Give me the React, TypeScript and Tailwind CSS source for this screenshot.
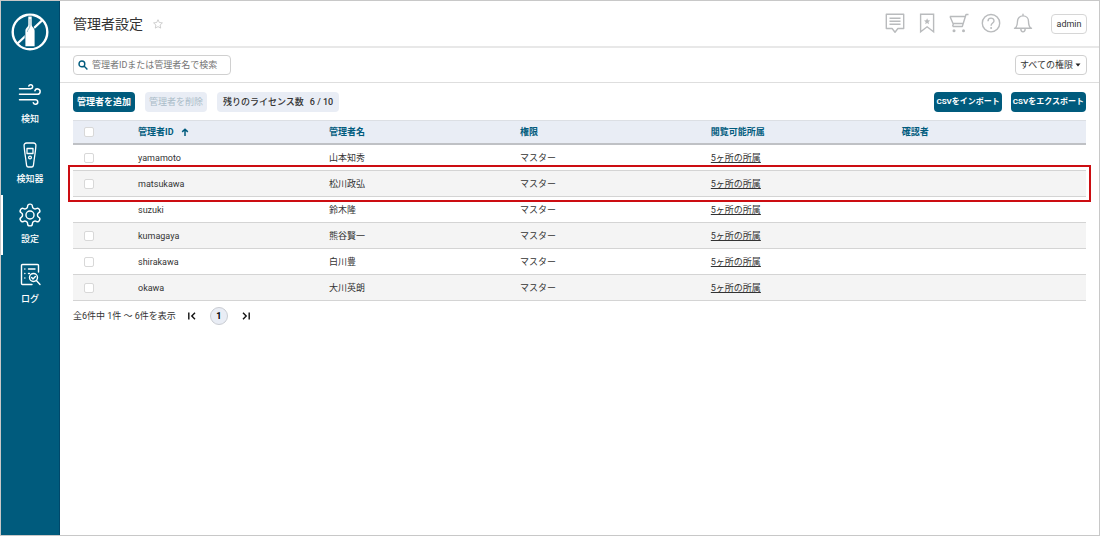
import type { ReactNode } from "react";

function LogoIcon() {
  return (
    <svg viewBox="0 0 40 40" className="h-10 w-10" aria-hidden="true">
      <circle cx="20" cy="20" r="17.3" fill="none" stroke="#fff" strokeWidth="2.4" />
      <path d="M7.500 31.500 32.500 8" stroke="#fff" strokeWidth="2.400" />
      <path
        d="M18.300 4.500h3.400v8.300c0 2.400 2.900 3.200 2.900 6v15.400h-9.200V18.800c0-2.800 2.900-3.600 2.900-6z"
        fill="#fff"
        stroke="#005b7d"
        strokeWidth="1.4"
        paintOrder="stroke"
      />
      <path d="M17.300 20c0-2.600 2.700-3.400 2.700-6.500V7" fill="none" stroke="#7fadbe" strokeWidth=".8" />
    </svg>
  );
}

function WindIcon() {
  return (
    <svg viewBox="0 0 24 24" className="size-6" fill="none" stroke="#fff" strokeWidth="1.5" strokeLinecap="round" aria-hidden="true">
      <path d="M1.500 5.700h11.200a2 2 0 1 0-1.900-2.600" />
      <path d="M1.500 11.300h18a2.700 2.700 0 1 0-2.600-3.600" />
      <path d="M1.500 16.700h16a2.300 2.300 0 1 1-2.200 3.100" />
    </svg>
  );
}

function DeviceIcon() {
  return (
    <svg viewBox="0 0 24 26" className="h-[26px] w-6" fill="none" stroke="#fff" strokeWidth="1.3" strokeLinejoin="round" aria-hidden="true">
      <path d="M8.600 1h6.800c1.600 0 2.600 1 2.500 2.500-.2 3.500-.8 8-1.500 12.500l-1 7.500c-.2 1-.7 1.500-1.600 1.500h-3.600c-.9 0-1.400-.5-1.600-1.500l-1-7.500C6.900 11.500 6.300 7 6.100 3.500 6 2 7 1 8.600 1z" />
      <path d="M9 6.500h6v5H9z" />
      <circle cx="12" cy="15.500" r="1.400" />
    </svg>
  );
}

function GearIcon() {
  return (
    <svg viewBox="1 1 22 22" className="size-6" fill="none" stroke="#fff" strokeWidth="1.3" strokeLinejoin="round" aria-hidden="true">
      <path d="M12.220 2h-.44a2 2 0 0 0-2 2v.18a2 2 0 0 1-1 1.730l-.43.25a2 2 0 0 1-2 0l-.15-.08a2 2 0 0 0-2.730.73l-.22.38a2 2 0 0 0 .73 2.730l.15.1a2 2 0 0 1 1 1.720v.51a2 2 0 0 1-1 1.740l-.15.09a2 2 0 0 0-.73 2.730l.22.38a2 2 0 0 0 2.730.73l.15-.08a2 2 0 0 1 2 0l.43.25a2 2 0 0 1 1 1.730V20a2 2 0 0 0 2 2h.44a2 2 0 0 0 2-2v-.18a2 2 0 0 1 1-1.730l.43-.25a2 2 0 0 1 2 0l.15.08a2 2 0 0 0 2.730-.73l.22-.39a2 2 0 0 0-.73-2.730l-.15-.08a2 2 0 0 1-1-1.740v-.5a2 2 0 0 1 1-1.740l.15-.09a2 2 0 0 0 .73-2.730l-.22-.38a2 2 0 0 0-2.730-.73l-.15.08a2 2 0 0 1-2 0l-.43-.25a2 2 0 0 1-1-1.730V4a2 2 0 0 0-2-2z" />
      <circle cx="12" cy="12" r="3.700" />
    </svg>
  );
}

function LogIcon() {
  return (
    <svg viewBox="0 0 24 24" className="size-6" fill="none" stroke="#fff" strokeWidth="1.4" strokeLinecap="round" strokeLinejoin="round" aria-hidden="true">
      <path d="M20.500 9V2.500a1 1 0 0 0-1-1h-15a1 1 0 0 0-1 1v18a1 1 0 0 0 1 1H14" />
      <path d="M10.500 6H17M10.500 10.500h1M6.800 6h.1M6.800 10.500h.1M6.800 15h.1" />
      <circle cx="15.500" cy="14.500" r="4" />
      <path d="m18.400 17.500 3.600 4M13.700 14.500l1.300 1.400 2.400-2.500" />
    </svg>
  );
}

function HeaderIcon({ label, children }: { label: string; children: ReactNode }) {
  return (
    <button type="button" aria-label={label} className="text-[#b9bbbd]">
      <svg viewBox="0 0 20 20" className="size-5 overflow-visible" fill="none" stroke="currentColor" strokeWidth="1.4" aria-hidden="true">
        {children}
      </svg>
    </button>
  );
}

function CheckBox({ label }: { label: string }) {
  return (
    <input
      type="checkbox"
      aria-label={label}
      className="block size-[10px] appearance-none rounded-xs border border-[#d8d8d8] bg-white checked:bg-[#005b7d]"
    />
  );
}

const navItems = [
  { label: "検知", icon: <WindIcon /> },
  { label: "検知器", icon: <DeviceIcon /> },
  { label: "設定", icon: <GearIcon />, active: true },
  { label: "ログ", icon: <LogIcon /> },
];

const admins = [
  { id: "yamamoto", name: "山本知秀", selectable: true },
  { id: "matsukawa", name: "松川政弘", selectable: true, highlighted: true },
  { id: "suzuki", name: "鈴木隆", selectable: false },
  { id: "kumagaya", name: "熊谷賢一", selectable: true },
  { id: "shirakawa", name: "白川豊", selectable: true },
  { id: "okawa", name: "大川英朗", selectable: true },
];

export default function App() {
  return (
    <div className="flex min-h-screen border border-[#c8c8c8] bg-white font-['Roboto','Noto_Sans_CJK_JP',sans-serif] text-[9px] leading-3 text-[#333]">
      <nav className="w-[59px] shrink-0 border-r border-[#00486a] bg-[#005b7d] text-white">
        <a href="#home" aria-label="ホーム" className="flex justify-center pt-[11px] pb-[23px]">
          <LogoIcon />
        </a>
        <ul>
          {navItems.map((item) => (
            <li key={item.label}>
              <a
                href={`#${item.label}`}
                className={`flex h-[60px] flex-col items-center border-l-2 pr-0.5 leading-[8px] font-medium ${item.active ? "border-white" : "border-transparent"}`}
              >
                <span className="flex h-10 items-center">{item.icon}</span>
                <span>{item.label}</span>
              </a>
            </li>
          ))}
        </ul>
      </nav>

      <div className="min-w-0 flex-1">
        <header className="flex h-[47px] items-center justify-between border-b-2 border-[#e8e8e8] pr-3 pl-[13px]">
          <div className="flex items-center gap-[10px]">
            <h1 className="text-sm leading-5">管理者設定</h1>
            <button type="button" aria-label="お気に入り">
              <svg viewBox="0 0 10 10" className="size-[10px]" fill="none" stroke="#c4c4c4" strokeWidth=".8" strokeLinejoin="round" aria-hidden="true">
                <path d="m5 .7 1.300 2.800 3.100.4-2.300 2.100.6 3.100L5 7.600 2.300 9.100l.6-3.100L.6 3.900l3.100-.4z" />
              </svg>
            </button>
          </div>
          <div className="flex items-center gap-3">
            <HeaderIcon label="メッセージ">
              <path d="M1.300.3h17.400v14.200h-5.800L10 18.200l-2.900-3.700H1.300zM4.500 4.300h11M4.500 7.300h11M4.500 10.300h11" strokeLinejoin="round" />
            </HeaderIcon>
            <HeaderIcon label="ブックマーク">
              <path d="M3.600.3h13v17.500l-6.500-5-6.500 5z" />
              <path d="m10.100 4.300.9 2 2.200.2-1.700 1.500.5 2.200-1.900-1.200-1.900 1.200.5-2.200L7 6.500l2.200-.2z" fill="currentColor" stroke="none" />
            </HeaderIcon>
            <HeaderIcon label="カート">
              <path d="M19.500.5H17l-3.700 12H3.800M.8 2.500h15M1 2.500l3 7h10M4.500 9.500l-1 3" strokeLinejoin="round" />
              <circle cx="5" cy="16.800" r="1.500" fill="currentColor" stroke="none" />
              <circle cx="14.500" cy="16.800" r="1.500" fill="currentColor" stroke="none" />
            </HeaderIcon>
            <HeaderIcon label="ヘルプ">
              <circle cx="10" cy="9.200" r="8.700" />
              <path d="M7 7.200c0-4 6-4 6-.3 0 2.100-2.900 2.200-2.900 4.800" />
              <circle cx="10.100" cy="14" r="1" fill="currentColor" stroke="none" />
            </HeaderIcon>
            <HeaderIcon label="通知">
              <path d="M1.500 14.200h17M2 14.200c2.500-2 2.500-4.500 2.500-7 0-3 2.200-5.300 5.500-5.300s5.500 2.300 5.500 5.300c0 2.500 0 5 2.500 7M7.800 14.700c.2 4.200 4.200 4.200 4.400 0M10 .2v1.500" strokeLinecap="round" strokeLinejoin="round" />
            </HeaderIcon>
            <button type="button" className="ml-1.5 h-5 w-9 rounded border border-[#d6d6d6]">
              admin
            </button>
          </div>
        </header>

        <section className="flex h-[35px] items-center justify-between border-b border-[#dedede] pr-3 pl-[13px]">
          <label className="flex h-5 w-[158px] items-center gap-1 rounded border border-[#d0d0d0] px-1">
            <svg viewBox="0 0 10 10" className="size-[10px] shrink-0" fill="none" stroke="#005b7d" strokeWidth="1.4" aria-hidden="true">
              <circle cx="3.900" cy="3.900" r="2.900" />
              <path d="m6 6 3.400 3.400" />
            </svg>
            <input
              type="text"
              aria-label="管理者を検索"
              placeholder="管理者IDまたは管理者名で検索"
              className="min-w-0 flex-1 bg-transparent outline-none placeholder:text-[#757575]"
            />
          </label>
          <div className="relative">
            <select aria-label="権限" className="h-5 w-[72px] appearance-none rounded border border-[#d0d0d0] pl-1">
              <option>すべての権限</option>
              <option>マスター</option>
            </select>
            <svg viewBox="0 0 6 4" className="pointer-events-none absolute top-2 right-1.5 h-1 w-1.5" aria-hidden="true">
              <path d="M.5.5h5L3 3.500z" fill="#222" />
            </svg>
          </div>
        </section>

        <main className="px-[13px]">
          <div className="flex items-center justify-between pt-[9px] pb-2">
            <div className="flex gap-[10px]">
              <button type="button" className="h-5 rounded bg-[#005b7d] px-1 font-bold text-white">
                管理者を追加
              </button>
              <button type="button" disabled className="h-5 rounded bg-[#e9edf5] px-1 text-[#a9bcc8]">
                管理者を削除
              </button>
              <p className="flex h-5 items-center gap-1.5 rounded bg-[#e9edf5] px-1.5 font-medium">
                <span>残りのライセンス数</span>
                <span>6 / 10</span>
              </p>
            </div>
            <div className="flex gap-[9px]">
              <button type="button" className="h-5 rounded bg-[#005b7d] px-0.5 text-[8px] font-bold text-white">
                CSVをインポート
              </button>
              <button type="button" className="h-5 rounded bg-[#005b7d] px-0.5 text-[8px] font-bold text-white">
                CSVをエクスポート
              </button>
            </div>
          </div>

          <table className="w-full table-fixed border-separate border-spacing-0 text-left">
            <colgroup>
              <col className="w-[65px]" />
              <col className="w-[18.85%]" />
              <col className="w-[18.85%]" />
              <col className="w-[18.85%]" />
              <col className="w-[18.85%]" />
              <col />
            </colgroup>
            <thead>
              <tr className="h-[25px] bg-[#e9edf5] text-[#005b7d] *:border-t *:border-b-2 *:border-t-[#dcdfe4] *:border-b-[#bfc1c5]">
                <th className="pl-[11px]">
                  <CheckBox label="すべて選択" />
                </th>
                <th>
                  <span className="flex items-center gap-2">
                    管理者ID
                    <svg viewBox="0 0 8 8" className="size-2" fill="none" stroke="currentColor" strokeWidth="1.5" aria-hidden="true">
                      <path d="M4 8V1.300M1.200 3.900 4 1.200l2.800 2.700" />
                    </svg>
                  </span>
                </th>
                <th>管理者名</th>
                <th>権限</th>
                <th>閲覧可能所属</th>
                <th>確認者</th>
              </tr>
            </thead>
            <tbody>
              {admins.map((admin) => (
                <tr key={admin.id} className="relative h-[26px] *:border-b *:border-[#d4d4d4] even:bg-[#f4f4f4]">
                  <td className="pl-[11px]">
                    {admin.selectable && <CheckBox label={`${admin.id}を選択`} />}
                    {admin.highlighted && (
                      <span className="pointer-events-none absolute -inset-x-[5px] -top-[6px] -bottom-[5px] border-2 border-[#cc0d12]" />
                    )}
                  </td>
                  <td>{admin.id}</td>
                  <td>{admin.name}</td>
                  <td>マスター</td>
                  <td>
                    <a href={`#${admin.id}`} className="underline">
                      5ヶ所の所属
                    </a>
                  </td>
                  <td />
                </tr>
              ))}
            </tbody>
          </table>

          <div className="flex items-center gap-3 pt-1.5">
            <p>全6件中 1件 ～ 6件を表示</p>
            <button type="button" aria-label="最初のページ">
              <svg viewBox="0 0 8 8" className="size-2" fill="none" stroke="#111" strokeWidth="1.4" aria-hidden="true">
                <path d="M.8.5v7M7 .8 3.800 4 7 7.200" />
              </svg>
            </button>
            <button type="button" className="mx-0.5 size-[18px] rounded-full border border-[#c9ccd2] bg-[#e9edf5] font-bold text-black">
              1
            </button>
            <button type="button" aria-label="最後のページ">
              <svg viewBox="0 0 8 8" className="size-2" fill="none" stroke="#111" strokeWidth="1.4" aria-hidden="true">
                <path d="M7.200.5v7M1 .8 4.200 4 1 7.200" />
              </svg>
            </button>
          </div>
        </main>
      </div>
    </div>
  );
}
